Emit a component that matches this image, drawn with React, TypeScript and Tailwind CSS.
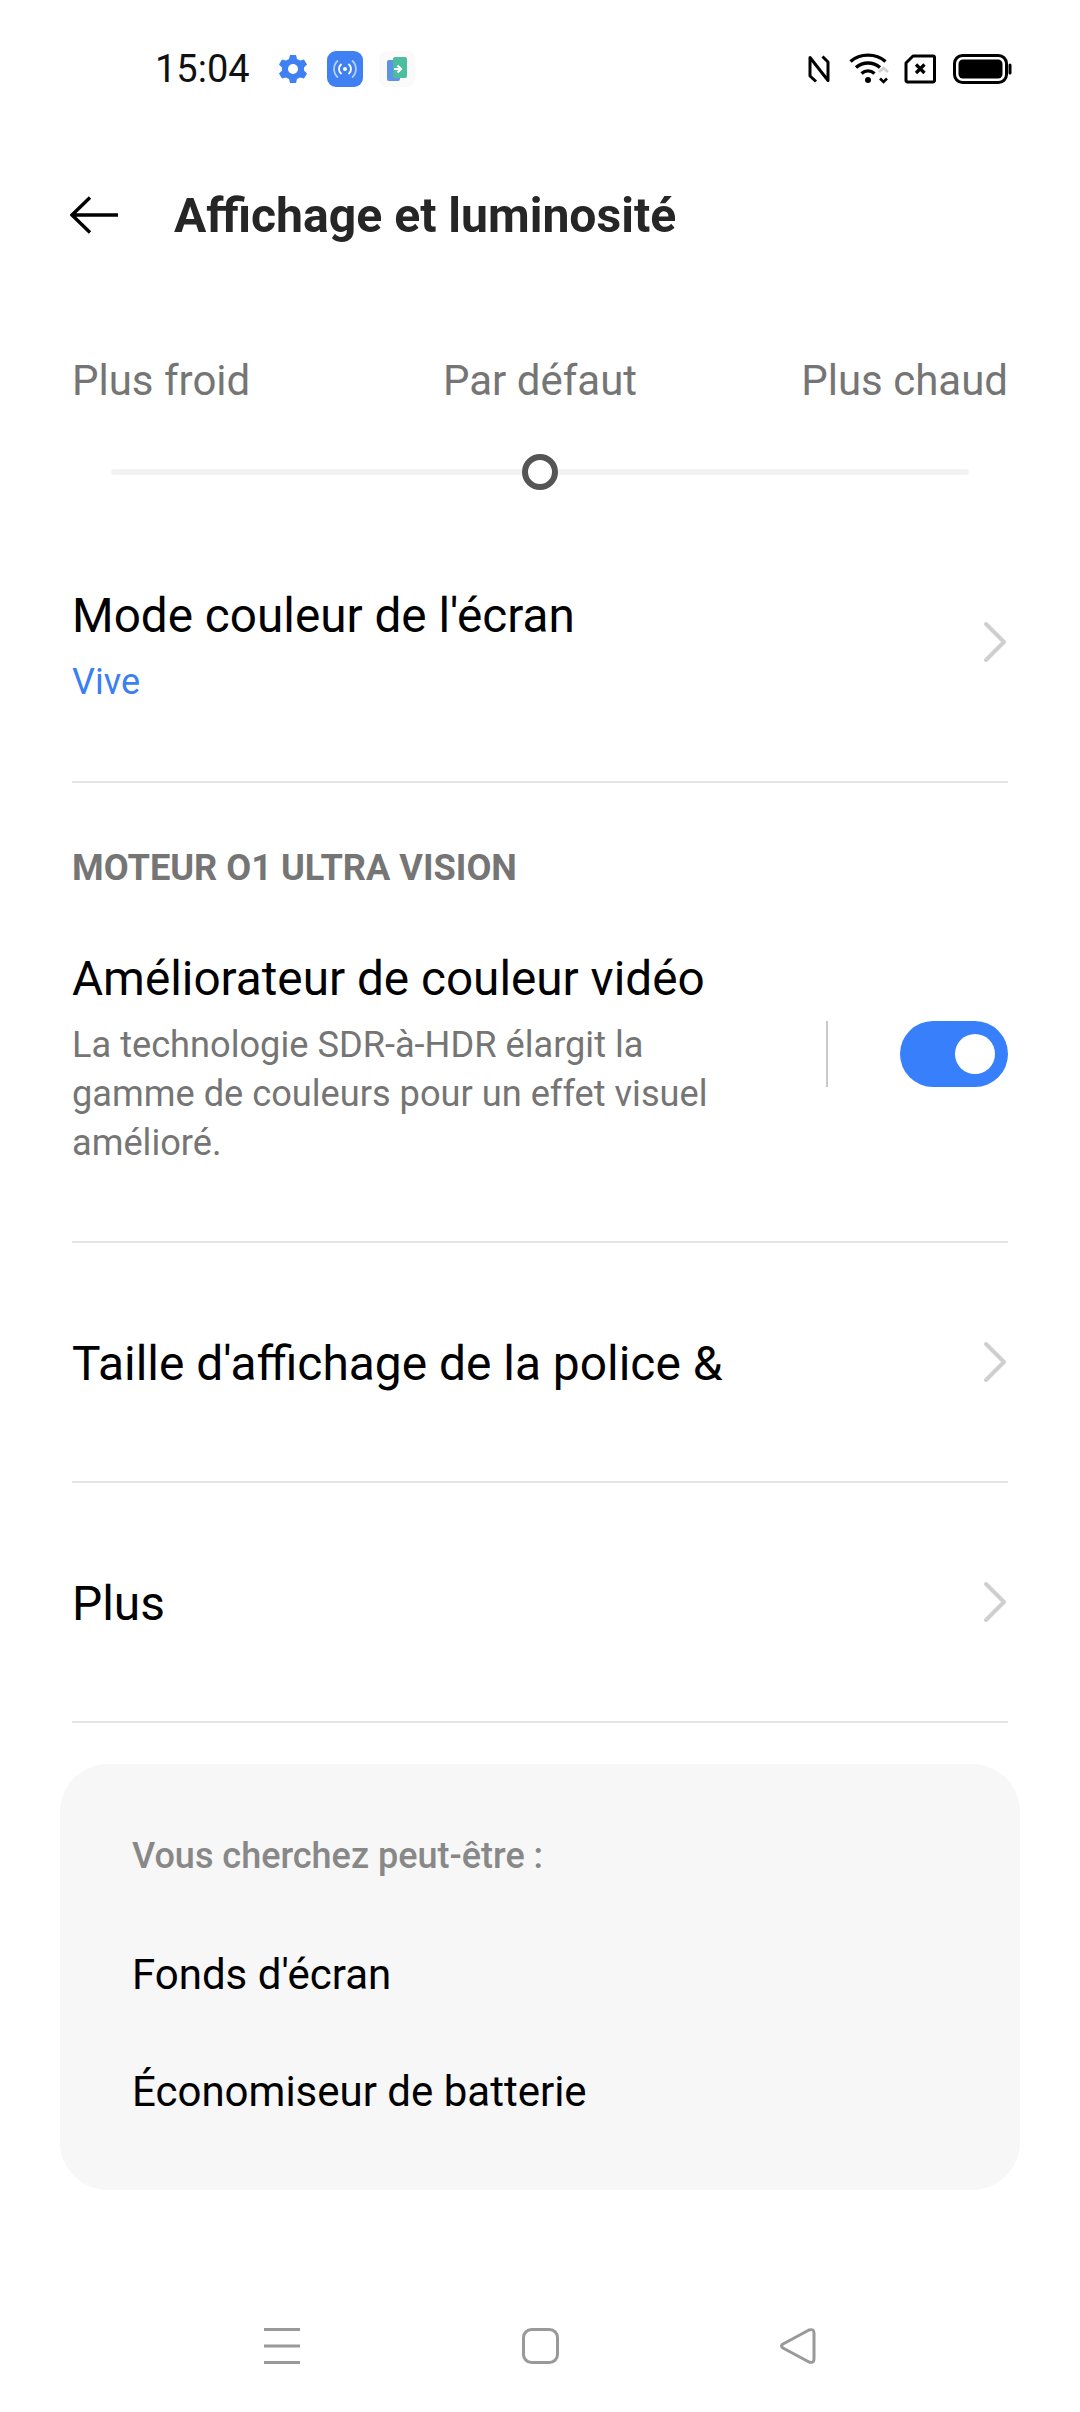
import React from 'react';

const Chevron = () => (
  <svg width="26" height="44" viewBox="0 0 26 44" fill="none" className="shrink-0">
    <path d="M4 4 L22 22 L4 40" stroke="#cfcfcf" strokeWidth="4" strokeLinecap="round" strokeLinejoin="round" />
  </svg>
);

const StatusBar = () => (
  <div className="h-[138px] flex items-center pl-[155px] pr-[68px]">
    <span className="text-[38px] leading-[44px] text-[#111] w-[123px]">15:04</span>
    <svg width="30" height="30" viewBox="0 0 30 30" className="mr-[19px]">
      <path
        fill="#3f80f2"
        fillRule="evenodd"
        d="M12 1h6l1 4 3 1.600 4-1.200 3 5.200-3 2.900v3l3 2.900-3 5.200-4-1.200-3 1.600-1 4h-6l-1-4-3-1.600-4 1.200-3-5.200 3-2.900v-3l-3-2.900 3-5.200 4 1.200 3-1.600z M15 10a5 5 0 1 0 0 10a5 5 0 0 0 0-10z"
      />
    </svg>
    <div className="w-[36px] h-[36px] rounded-[9px] bg-[#3f80f2] mr-[16px] flex items-center justify-center">
      <svg width="26" height="20" viewBox="0 0 26 20" fill="none">
        <circle cx="13" cy="10" r="2" fill="#fff" />
        <path d="M9 5.500a6 6 0 0 0 0 9M17 5.500a6 6 0 0 1 0 9" stroke="#fff" strokeWidth="1.800" strokeLinecap="round" />
        <path d="M5.500 2a11 11 0 0 0 0 16M20.500 2a11 11 0 0 1 0 16" stroke="#b5cffa" strokeWidth="1.800" strokeLinecap="round" />
      </svg>
    </div>
    <svg width="36" height="36" viewBox="0 0 36 36">
      <rect width="36" height="36" rx="8" fill="#fafafa" />
      <rect x="8" y="9" width="13" height="21" rx="2" fill="#5b93e6" />
      <rect x="14" y="6" width="14" height="21" rx="2" fill="#4dbd9f" />
      <path d="M15 18h7M18.500 14.500l3.500 3.500-3.500 3.500" stroke="#fff" strokeWidth="2.200" fill="none" />
    </svg>
    <div className="flex-1" />
    <svg width="22" height="28" viewBox="0 0 22 28" fill="none" className="mr-[19px]">
      <path d="M8 26.500 L2 21 V2.500 L20 25.500 V7 L14.500 1.500" stroke="#000" strokeWidth="3" strokeLinejoin="round" />
    </svg>
    <svg width="42" height="32" viewBox="0 0 42 32" fill="none" className="mr-[13px]">
      <path d="M1.500 8.500C11 0 27 0 36.500 8.500" stroke="#000" strokeWidth="3.400" />
      <path d="M7 14.500c7-6 17-6 24 0" stroke="#000" strokeWidth="3.400" />
      <path d="M12.500 20.500c4-3.400 9-3.400 13 0" stroke="#000" strokeWidth="3.400" />
      <circle cx="19" cy="27" r="3" fill="#000" />
      <path d="M30 19l4.500-4 4.500 4" stroke="#cfcfcf" strokeWidth="2.600" />
      <path d="M31 25.500l3.500 3.500 3.500-3.500" stroke="#000" strokeWidth="2.600" />
    </svg>
    <svg width="32" height="30" viewBox="0 0 32 30" fill="none" className="mr-[17px]">
      <path d="M9 2H29a1.500 1.500 0 0 1 1.500 1.500V26.500A1.500 1.500 0 0 1 29 28H3.500A1.500 1.500 0 0 1 2 26.500V9z" stroke="#000" strokeWidth="3" strokeLinejoin="round" />
      <path d="M12 10.500l8.500 8.500M20.500 10.500L12 19" stroke="#000" strokeWidth="3.200" />
    </svg>
    <svg width="59" height="30" viewBox="0 0 59 30" fill="none">
      <rect x="1.500" y="1.500" width="52" height="27" rx="8" stroke="#000" strokeWidth="3" />
      <rect x="5.500" y="5.500" width="44" height="19" rx="4.500" fill="#000" />
      <rect x="55.500" y="9.500" width="3" height="11" rx="1.500" fill="#000" />
    </svg>
  </div>
);

const ArrowRow = ({ label }: { label: string }) => (
  <div className="h-[240px] flex items-center justify-between border-b-2 border-[#e4e4e4]">
    <span className="pt-[4px] text-[47.900px] leading-[60px] text-black">{label}</span>
    <Chevron />
  </div>
);

const App: React.FC = () => {
  return (
    <div className="w-[1080px] h-[2412px] bg-white flex flex-col font-['Roboto',sans-serif]">
      <StatusBar />

      <div className="h-[154px] flex items-center pl-[70px]">
        <svg width="48" height="38" viewBox="0 0 48 38" fill="none">
          <path d="M20 1.500 L2 19 L20 36.500 M2 19 H48" stroke="#000" strokeWidth="3.400" />
        </svg>
        <h1 className="ml-[56px] mt-[2px] text-[48.100px] leading-[60px] font-bold text-[#262626]">Affichage et luminosité</h1>
      </div>

      <div className="px-[72px] flex flex-col">
        <div className="mt-[59px] grid grid-cols-3 text-[42px] leading-[60px] text-[#757575]">
          <span>Plus froid</span>
          <span className="text-center">Par défaut</span>
          <span className="text-right">Plus chaud</span>
        </div>
        <div className="mt-[43px] mx-[39px] h-[36px] relative flex items-center">
          <div className="w-full h-[6px] rounded-full bg-[#f2f2f2]" />
          <div className="absolute left-[411px] top-0 w-[36px] h-[36px] rounded-full bg-white border-[6px] border-[#555]" />
        </div>

        <div className="mt-[12px] h-[281px] flex items-center justify-between border-b-2 border-[#e4e4e4]">
          <div className="flex flex-col mt-[9px]">
            <span className="text-[47.700px] leading-[60px] text-black">Mode couleur de l'écran</span>
            <span className="mt-[12px] text-[36px] leading-[48px] text-[#3b7ff0]">Vive</span>
          </div>
          <Chevron />
        </div>

        <div className="mt-[61px] text-[36.200px] leading-[48px] font-bold text-[#757575]">MOTEUR O1 ULTRA VISION</div>

        <div className="mt-[57px] flex items-start pb-[74px] border-b-2 border-[#e4e4e4]">
          <div className="w-[660px] shrink-0">
            <div className="text-[47.700px] leading-[60px] text-black whitespace-nowrap">Améliorateur de couleur vidéo</div>
            <p className="mt-[11px] text-[36.200px] leading-[49px] text-[#757575]">
              La technologie SDR-à-HDR élargit la gamme de couleurs pour un effet visuel amélioré.
            </p>
          </div>
          <div className="mt-[72px] ml-[94px] w-[2px] h-[66px] bg-[#c9c9c9]" />
          <div className="mt-[72px] ml-[72px] w-[108px] h-[66px] rounded-full bg-[#387ffb] flex items-center justify-end pr-[13px]">
            <div className="w-[40px] h-[40px] rounded-full bg-white" />
          </div>
        </div>

        <ArrowRow label="Taille d'affichage de la police &" />
        <ArrowRow label="Plus" />
      </div>

      <div className="mt-[41px] mx-[60px] h-[426px] rounded-[48px] bg-[#f7f7f7] px-[72px] pt-[68px]">
        <div className="text-[36px] leading-[48px] font-medium text-[#888]">Vous cherchez peut-être :</div>
        <div className="mt-[69px] text-[42px] leading-[52px] text-black">Fonds d'écran</div>
        <div className="mt-[65px] text-[42px] leading-[52px] text-black">Économiseur de batterie</div>
      </div>

      <div className="mt-[138px] flex items-center pl-[264px]">
        <svg width="36" height="36" viewBox="0 0 36 36" fill="none">
          <path d="M0 1.500H36M0 18H36M0 34.500H36" stroke="#999" strokeWidth="3" />
        </svg>
        <svg width="37" height="36" viewBox="0 0 37 36" fill="none" className="ml-[222px]">
          <rect x="1.500" y="1.500" width="34" height="33" rx="8" stroke="#999" strokeWidth="3" />
        </svg>
        <svg width="36" height="36" viewBox="0 0 36 36" fill="none" className="ml-[221px]">
          <path d="M29 2 L3 16 Q0 18 3 20 L29 34 Q34 35.500 34 31 V5 Q34 0.500 29 2Z" stroke="#999" strokeWidth="3" strokeLinejoin="round" />
        </svg>
      </div>
    </div>
  );
};

export default App;
